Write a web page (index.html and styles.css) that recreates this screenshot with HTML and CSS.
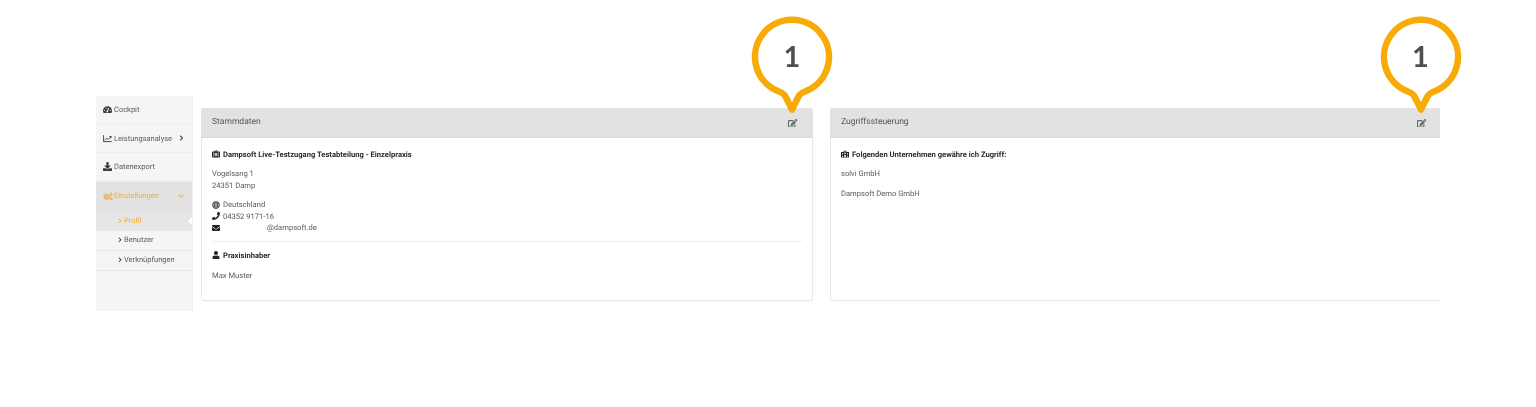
FILE: index.html
```html
<!DOCTYPE html>
<html lang="de">
<head>
<meta charset="utf-8">
<title>Stammdaten</title>
<link rel="stylesheet" href="styles.css">
</head>
<body>
<svg class="defs" width="0" height="0" aria-hidden="true">
  <defs>
    <symbol id="i-edit" viewBox="0 0 576 512"><path d="M402.6 83.2l90.2 90.2c3.8 3.8 3.8 10 0 13.8L274.4 405.6l-92.8 10.3c-12.4 1.4-22.9-9.1-21.5-21.5l10.3-92.8L388.8 83.2c3.8-3.8 10-3.8 13.8 0zm162-22.9l-48.8-48.8c-15.2-15.2-39.9-15.2-55.2 0l-35.4 35.4c-3.8 3.8-3.8 10 0 13.8l90.2 90.2c3.8 3.8 10 3.8 13.8 0l35.4-35.4c15.2-15.3 15.2-40 0-55.2zM384 346.2V448H64V128h229.8c3.2 0 6.2-1.3 8.5-3.5l40-40c7.6-7.6 2.2-20.5-8.5-20.5H48C21.5 64 0 85.5 0 112v352c0 26.5 21.5 48 48 48h352c26.5 0 48-21.5 48-48V306.2c0-10.7-12.9-16-20.5-8.5l-40 40c-2.2 2.3-3.5 5.3-3.5 8.5z"/></symbol>
    <symbol id="i-user" viewBox="0 0 448 512"><path d="M224 256c70.7 0 128-57.3 128-128S294.7 0 224 0 96 57.3 96 128s57.3 128 128 128zm89.6 32h-16.7c-22.2 10.2-46.9 16-72.9 16s-50.6-5.8-72.9-16h-16.7C60.2 288 0 348.2 0 422.4V464c0 26.5 21.5 48 48 48h352c26.5 0 48-21.5 48-48v-41.6c0-74.2-60.2-134.4-134.4-134.4z"/></symbol>
    <symbol id="i-mail" viewBox="0 0 512 512"><path d="M502.3 190.8c3.9-3.1 9.7-.2 9.7 4.7V400c0 26.5-21.5 48-48 48H48c-26.5 0-48-21.5-48-48V195.6c0-5 5.7-7.8 9.7-4.7 22.4 17.4 52.1 39.5 154.1 113.6 21.1 15.4 56.7 47.8 92.2 47.6 35.7.3 72-32.8 92.3-47.6 102-74.1 131.6-96.3 154-113.7zM256 320c23.2.4 56.6-29.2 73.4-41.4 132.7-96.3 142.8-104.7 173.4-128.7 5.8-4.5 9.2-11.5 9.2-18.9v-19c0-26.5-21.5-48-48-48H48C21.5 64 0 85.5 0 112v19c0 7.4 3.4 14.3 9.2 18.9 30.6 23.9 40.7 32.4 173.4 128.7 16.8 12.2 50.2 41.8 73.4 41.4z"/></symbol>
    <symbol id="i-phone" viewBox="0 0 512 512"><path d="M493.4 24.6l-104-24c-11.3-2.6-22.9 3.3-27.5 13.9l-48 112c-4.2 9.8-1.4 21.3 6.9 28l60.6 49.6c-36 76.7-98.9 140.5-177.2 177.2l-49.6-60.6c-6.8-8.3-18.2-11.1-28-6.9l-112 48C3.9 366.5-2 378.1.6 389.4l24 104C27.1 504.2 36.7 512 48 512c256.1 0 464-207.5 464-464 0-11.2-7.7-20.9-18.6-23.4z"/></symbol>
    <symbol id="i-right" viewBox="0 0 320 512"><path d="M285.476 272.971L91.132 467.314c-9.373 9.373-24.569 9.373-33.941 0l-22.667-22.667c-9.357-9.357-9.375-24.522-.04-33.901L188.505 256 34.484 101.255c-9.335-9.379-9.317-24.544.04-33.901l22.667-22.667c9.373-9.373 24.569-9.373 33.941 0L285.475 239.03c9.373 9.372 9.373 24.568.001 33.941z"/></symbol>
    <symbol id="i-down" viewBox="0 0 448 512"><path d="M207.029 381.476L12.686 187.132c-9.373-9.373-9.373-24.569 0-33.941l22.667-22.667c9.357-9.357 24.522-9.375 33.901-.04L224 284.505l154.745-154.021c9.379-9.335 24.544-9.317 33.901.04l22.667 22.667c9.373 9.373 9.373 24.569 0 33.941L240.971 381.476c-9.373 9.372-24.569 9.372-33.942 0z"/></symbol>
    <symbol id="i-download" viewBox="0 0 512 512"><path d="M216 0h80c13.3 0 24 10.7 24 24v168h87.7c17.8 0 26.7 21.5 14.1 34.1L269.7 378.3c-7.5 7.5-19.8 7.5-27.3 0L90.1 226.1c-12.6-12.6-3.7-34.1 14.1-34.1H192V24c0-13.3 10.7-24 24-24zm296 376v112c0 13.3-10.7 24-24 24H24c-13.3 0-24-10.7-24-24V376c0-13.3 10.7-24 24-24h146.7l49 49c20.1 20.1 52.5 20.1 72.6 0l49-49H488c13.3 0 24 10.7 24 24z"/></symbol>
    <symbol id="i-chart" viewBox="0 0 16 16"><g fill="none" stroke="currentColor" stroke-width="1.600"><path d="M1 2v11.500h14.500"/><path d="M3 11l3.500-3.500 3 2L14 5"/></g><path d="M10.500 3.500H15V8z"/></symbol>
    <symbol id="i-gauge" viewBox="0 0 16 16"><path fill-rule="evenodd" d="M8 2a8 8 0 0 0-8 8c0 1.500.4 2.900 1.100 4 .2.300.5.400.8.400h12.200c.3 0 .6-.1.8-.4.700-1.100 1.100-2.500 1.100-4a8 8 0 0 0-8-8zM7 10.400 9.600 5l1.400.6-2.200 5.400a1.500 1.500 0 1 1-1.800-.6zM3 8.500a1 1 0 1 1 0 2 1 1 0 0 1 0-2zm10 0a1 1 0 1 1 0 2 1 1 0 0 1 0-2zM5.500 4.500a1 1 0 1 1 0 2 1 1 0 0 1 0-2z"/></symbol>
    <symbol id="i-case" viewBox="0 0 16 16"><path fill-rule="evenodd" d="M5 3V2a1 1 0 0 1 1-1h4a1 1 0 0 1 1 1v1h3.500A1.500 1.500 0 0 1 16 4.500v9a1.500 1.500 0 0 1-1.500 1.500h-13A1.500 1.500 0 0 1 0 13.500v-9A1.500 1.500 0 0 1 1.500 3zm1.300 0h3.400V2.300H6.300zM3 4.500v9h1.500v-9zm8.500 0v9H13v-9zM6.500 6v6h3V6z"/></symbol>
    <symbol id="i-building" viewBox="0 0 16 16"><path fill-rule="evenodd" d="M5 1.500h6V4h5v11H0V4h5zM6.500 3v2h3V3zM2 6v1.500h2V6zm0 3v1.500h2V9zm0 3v1.500h2V12zm4.500-5.500v2h3v-2zm0 3.500v4h3v-4zM12 6v1.500h2V6zm0 3v1.500h2V9zm0 3v1.500h2V12z"/></symbol>
    <symbol id="i-globe" viewBox="0 0 16 16"><g fill="none" stroke="currentColor" stroke-width="1.500"><circle cx="8" cy="8" r="7"/><ellipse cx="8" cy="8" rx="3" ry="7"/><path d="M1 8h14M2 4.500h12M2 11.500h12"/></g></symbol>
    <symbol id="i-cogs" viewBox="0 0 20 16"><g fill="none" stroke="currentColor"><circle cx="7" cy="8.500" r="3.300" stroke-width="2.800"/><circle cx="7" cy="8.500" r="5.500" stroke-width="2.200" stroke-dasharray="2.400 1.900"/><circle cx="16" cy="3.500" r="1.700" stroke-width="1.800"/><circle cx="16" cy="3.500" r="3" stroke-width="1.400" stroke-dasharray="1.500 1.200"/><circle cx="16" cy="12.500" r="1.700" stroke-width="1.800"/><circle cx="16" cy="12.500" r="3" stroke-width="1.400" stroke-dasharray="1.500 1.200"/></g></symbol>
    <symbol id="i-pin" viewBox="0 0 90 104"><path d="M32 79.500A37 37 0 1 1 58 79.500Q53 81 51 85.500L45 97.500 39 85.500Q37 81 32 79.500Z" fill="#fff" stroke="#f8aa07" stroke-width="6.500" stroke-linejoin="round"/></symbol>
  </defs>
</svg>

<div class="app">
  <nav class="side">
    <a class="side-item"><svg class="ic ic-nav"><use href="#i-gauge"/></svg><span class="side-label">Cockpit</span></a>
    <a class="side-item"><svg class="ic ic-nav"><use href="#i-chart"/></svg><span class="side-label">Leistungsanalyse</span><svg class="ic ic-caret"><use href="#i-right"/></svg></a>
    <a class="side-item"><svg class="ic ic-nav"><use href="#i-download"/></svg><span class="side-label">Datenexport</span></a>
    <a class="side-item is-open"><svg class="ic ic-nav ic-cogs"><use href="#i-cogs"/></svg><span class="side-label">Einstellungen</span><svg class="ic ic-caret ic-caret-down"><use href="#i-down"/></svg></a>
    <a class="sub-item is-active"><svg class="ic ic-sub"><use href="#i-right"/></svg>Profil</a>
    <a class="sub-item"><svg class="ic ic-sub"><use href="#i-right"/></svg>Benutzer</a>
    <a class="sub-item"><svg class="ic ic-sub"><use href="#i-right"/></svg>Verknüpfungen</a>
  </nav>

  <main class="panels">
    <section class="panel">
      <header class="panel-head"><h2 class="panel-title">Stammdaten</h2><svg class="ic ic-edit"><use href="#i-edit"/></svg></header>
      <div class="panel-body">
        <p class="strong"><svg class="ic ic-line"><use href="#i-case"/></svg>Dampsoft Live-Testzugang Testabteilung - Einzelpraxis</p>
        <p class="block">Vogelsang 1<br>24351 Damp</p>
        <ul class="contact">
          <li><svg class="ic ic-line ic-soft"><use href="#i-globe"/></svg>Deutschland</li>
          <li><svg class="ic ic-line"><use href="#i-phone"/></svg>04352 9171-16</li>
          <li><svg class="ic ic-line"><use href="#i-mail"/></svg><span class="mail">@dampsoft.de</span></li>
        </ul>
        <hr class="rule">
        <p class="strong"><svg class="ic ic-line"><use href="#i-user"/></svg>Praxisinhaber</p>
        <p class="block">Max Muster</p>
      </div>
      <div class="pin"><svg class="pin-shape"><use href="#i-pin"/></svg><span class="pin-num">1</span></div>
    </section>

    <section class="panel panel-cut">
      <header class="panel-head"><h2 class="panel-title">Zugriffssteuerung</h2><svg class="ic ic-edit"><use href="#i-edit"/></svg></header>
      <div class="panel-body">
        <p class="strong"><svg class="ic ic-line"><use href="#i-building"/></svg>Folgenden Unternehmen gewähre ich Zugriff:</p>
        <p class="block">solvi GmbH</p>
        <p class="block">Dampsoft Demo GmbH</p>
      </div>
      <div class="pin"><svg class="pin-shape"><use href="#i-pin"/></svg><span class="pin-num">1</span></div>
    </section>
  </main>
</div>
</body>
</html>
```

FILE: styles.css
```css
* { box-sizing: border-box; }

html, body {
  margin: 0;
  height: 100%;
  overflow: hidden;
  background: #fff;
}

body {
  font-family: Roboto, "Liberation Sans", sans-serif;
  font-size: 7.500px;
  line-height: 11.500px;
  color: #5a5a5a;
  text-rendering: geometricPrecision;
}

.defs { position: absolute; }

.app {
  display: flex;
  width: 1344px;
  margin: 96px 0 0 96px;
  will-change: transform;
}

.ic {
  display: block;
  flex: none;
  fill: currentColor;
}

/* Sidebar */
.side {
  flex: none;
  display: flex;
  flex-direction: column;
  width: 97px;
  height: 214.500px;
  background: #f5f5f5;
  border-right: 1px solid #efefef;
}

.side-item {
  display: flex;
  align-items: center;
  height: 28.500px;
  padding: 0 8.500px 0 6.500px;
  border-bottom: 1px solid #ececec;
  color: #5c5c5c;
}

.side-label { margin-left: 2.500px; }

.ic-nav { width: 9px; height: 9px; color: #3c3c3c; }
.ic-cogs { width: 10px; height: 9px; margin-right: -1px; color: inherit; }

.ic-caret { width: 5px; height: 6px; margin-left: auto; color: #333; }
.ic-caret-down { width: 6px; height: 6px; color: inherit; }

.side-item.is-open {
  height: 29px;
  background: #e2e2e2;
  color: #f3ad2e;
  border-bottom: 0;
}

.sub-item {
  position: relative;
  display: flex;
  align-items: center;
  gap: 2.500px;
  height: 20px;
  padding-left: 21.500px;
  border-bottom: 1px solid #e6e6e6;
  color: #5c5c5c;
}

.ic-sub { width: 4px; height: 5.500px; color: #333; }

.sub-item.is-active {
  background: #e6e6e6;
  color: #f3ad2e;
  border-bottom: 0;
}

.is-active .ic-sub { color: #f3ad2e; }

.is-active::after {
  content: "";
  position: absolute;
  right: 0;
  top: 6px;
  border: 4px solid transparent;
  border-left: 0;
  border-right-color: #fff;
}

/* Panels */
.panels {
  flex: 1;
  display: grid;
  grid-template-columns: 612px 610px;
  column-gap: 17px;
  align-items: start;
  padding: 12px 0 0 8px;
}

.panel {
  position: relative;
  height: 192.500px;
  border: 1px solid #e9e9e9;
  border-top: 0;
  border-radius: 3px;
  background: #fff;
  box-shadow: 0 1px 1px rgba(0, 0, 0, .03);
}

.panel-cut {
  border-right: 0;
  border-top-right-radius: 0;
  border-bottom-right-radius: 0;
  box-shadow: none;
}

.panel-head {
  display: flex;
  align-items: center;
  justify-content: space-between;
  height: 29.500px;
  margin: 0 -1px;
  padding: 0 15.500px 0 11px;
  background: #e2e2e2;
  border-radius: 3px 3px 0 0;
  border-bottom: 1px solid #d9d9d9;
}

.panel-cut .panel-head {
  margin-right: 0;
  padding-right: 14px;
  border-top-right-radius: 0;
}

.panel-title {
  margin: 1.500px 0 0;
  font-size: 8.500px;
  font-weight: 400;
  color: #555;
}

.ic-edit { width: 9.500px; height: 8.500px; color: #666; margin-top: 1px; }

.panel-body { padding: 11px 10px 0; font-size: 7.600px; }

.panel-body p { margin: 0; }

.strong {
  display: flex;
  align-items: center;
  gap: 3px;
  font-weight: 700;
  color: #2b2b2b;
}

.panel-body .block { margin-top: 8px; }

.contact {
  list-style: none;
  margin: 8px 0 0;
  padding: 0;
}

.contact li {
  display: flex;
  align-items: center;
  gap: 3px;
}

.ic-line { width: 8px; height: 8px; color: #222; }
.ic-soft { color: #333; }

.mail { margin-left: 44px; }

.rule {
  height: 1px;
  margin: 7.500px 0 7.500px;
  border: 0;
  background: #eee;
}

.rule ~ .block { margin-top: 9px; }

/* Callouts */
.pin {
  position: absolute;
  top: -96px;
  right: -25px;
  width: 90px;
  height: 104px;
}

.panel-cut .pin { right: -25.500px; }

.pin-shape {
  display: block;
  width: 90px;
  height: 104px;
}

.pin-num {
  position: absolute;
  left: 0;
  right: 0;
  top: 28px;
  text-align: center;
  font-family: Lato, "Open Sans", sans-serif;
  font-size: 29px;
  line-height: 34px;
  font-weight: 700;
  color: #4f4f4f;
}
```
